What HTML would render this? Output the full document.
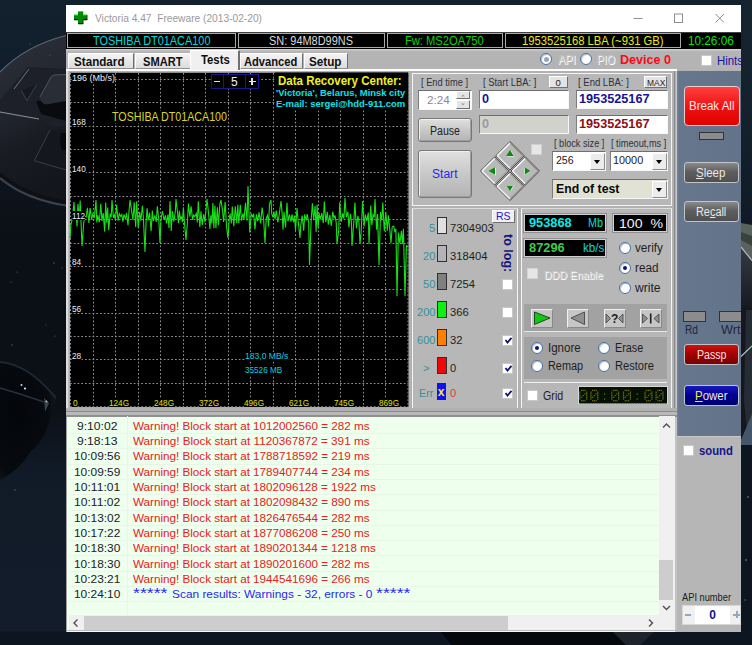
<!DOCTYPE html>
<html><head><meta charset="utf-8"><title>Victoria 4.47</title>
<style>
*{box-sizing:border-box;margin:0;padding:0}
html,body{width:752px;height:645px;overflow:hidden}
body{position:relative;background:#0d1620;font-family:"Liberation Sans",sans-serif;font-size:12px;color:#202020}
.a{position:absolute}
#bg{left:0;top:0;width:752px;height:645px}
#win{left:66px;top:5px;width:675px;height:626.5px;background:#b1b1b1}
#title{left:66px;top:5px;width:675px;height:27px;background:#fff}
#ttext{font-size:11.5px;color:#9a9a9a;white-space:pre}
#status{left:66px;top:31.7px;width:675px;height:17.5px;background:#000;border-top:1.5px solid #404040}
.cell{top:33px;height:15px;border:1px solid #a8a8a8;background:#000}
.ct{font-size:12px;white-space:nowrap}
.tt{font-size:12px;font-weight:bold;color:#101010;white-space:nowrap}
#tabrow{left:66px;top:49.2px;width:675px;height:21px;background:linear-gradient(#d8d8d8 0,#b8b8b8 2px,#b4b4b4 3px)}
.tab{top:53px;height:16px;font-weight:bold;font-size:13px;line-height:15px;text-align:center;color:#101010;background:linear-gradient(#f4f4f4,#dcdcdc);border-top:1px solid #fff;border-left:1px solid #fff;border-right:1px solid #707070;border-bottom:1px solid #909090;white-space:nowrap}
.tab.act{top:50px;height:20px;background:#f0f0f0;line-height:18px;border-bottom:none;border-right:2px solid #707070}
#pageline{left:66px;top:69.4px;width:611px;height:2px;background:#fff}
#chart{left:70px;top:72px;width:339px;height:336px;background:#000}
.pan{background:#b7b7b7;border:1.5px solid #f4f4f4}
.lbl{font-size:10px;color:#3c4454;white-space:nowrap;letter-spacing:0.2px}
.inp{background:#fff;border-top:1.5px solid #6e6e6e;border-left:1.5px solid #7c7c7c;border-right:1.5px solid #f8f8f8;border-bottom:1.5px solid #f8f8f8;font-weight:bold;font-size:14px;line-height:15px;padding-left:3px;font-family:"Liberation Serif",serif;white-space:nowrap;overflow:hidden}
.btn{background:linear-gradient(#e0e0e0,#c6c6c6 55%,#b4b4b4);border:1px solid #767676;border-radius:3px;box-shadow:inset 1px 1px 0 #f0f0f0,inset -1px -1px 0 #a0a0a0;text-align:center;font-size:13px;color:#202020}
.sbtn{background:#e4e4e4;border-top:1px solid #fff;border-left:1px solid #fff;border-right:1px solid #707070;border-bottom:1px solid #707070;text-align:center;font-size:10px;line-height:9px;color:#202020}
.radio{width:12px;height:12px;border-radius:50%;background:#fff;border:1.3px solid #4470a6;box-shadow:inset 1px 1px 1px rgba(0,0,0,.25)}
.radio.on:after{content:"";position:absolute;left:3px;top:3px;width:4px;height:4px;border-radius:50%;background:#10107a}
.chk{width:11px;height:11px;background:#fff;border:1px solid #c8c8c8}
.t12{font-size:12px;white-space:nowrap;color:#2a2a2a}
.disp{background:#000;border:1px solid #d0d0d0;box-shadow:0 0 0 1px #909090;white-space:nowrap}
.sbar{background:linear-gradient(#8a8a8a,#5e5e5e 45%,#505050);border:1px solid #c0c4c8;border-radius:3px;color:#e8e8e8;font-size:13px;text-align:center;line-height:19px}
.ind{background:#8c8c8c;border:1px solid #30343a}
.lrow{left:68px;width:591px;height:15.3px;font-size:11.5px;line-height:15px;white-space:nowrap}
.lt{position:absolute;left:0;width:53px;text-align:right;color:#202020}
.lm{position:absolute;left:64px;color:#e82020}
.yl{font-size:9.5px;color:#e8eef8;white-space:nowrap;background:#000;line-height:9px}
.xl{font-size:9.5px;color:#e0e010;white-space:nowrap;background:#000;line-height:9px}
.rl{left:405px;width:30px;text-align:right;font-size:13px;color:#3a9098;line-height:15px}
.rc{left:450px;font-size:13px;color:#2a2a2a;line-height:15px;white-space:nowrap}
.dd{width:15px;height:17px;background:#ececec;border-top:1px solid #fff;border-left:1px solid #fff;border-right:1.5px solid #8c8c8c;border-bottom:1.5px solid #8c8c8c}
.dd:after{content:"";position:absolute;left:3px;top:6px;border-left:3.5px solid transparent;border-right:3.5px solid transparent;border-top:4px solid #000}
.combo{font-family:"Liberation Sans",sans-serif;font-weight:normal;font-size:13px;color:#202028;line-height:16px}
.pb{top:309px;width:22px;height:19px;background:#c6c6c6;border-top:1px solid #f0f0f0;border-left:1px solid #f0f0f0;border-right:1px solid #8a8a8a;border-bottom:1px solid #8a8a8a}
</style></head><body>
<svg id="bg" class="a" width="752" height="645" viewBox="0 0 752 645">
<defs>
<linearGradient id="g0" x1="0" y1="0" x2="0" y2="1"><stop offset="0" stop-color="#13212f"/><stop offset="0.120" stop-color="#111d2a"/><stop offset="0.320" stop-color="#0d121a"/><stop offset="0.380" stop-color="#0b0f16"/><stop offset="0.620" stop-color="#0b0f16"/><stop offset="0.740" stop-color="#111b28"/><stop offset="1" stop-color="#121c2a"/></linearGradient>
<linearGradient id="g1" x1="0" y1="0" x2="0.200" y2="1"><stop offset="0" stop-color="#2c303a"/><stop offset="0.450" stop-color="#23262f"/><stop offset="0.700" stop-color="#191b23"/><stop offset="1" stop-color="#14161d"/></linearGradient>
<linearGradient id="g3" x1="0" y1="0" x2="0" y2="1"><stop offset="0" stop-color="#343a40"/><stop offset="1" stop-color="#14181e"/></linearGradient>
<radialGradient id="g4" cx="0.300" cy="0.400" r="0.800"><stop offset="0" stop-color="#04060a"/><stop offset="0.700" stop-color="#070a0f"/><stop offset="1" stop-color="#18222e"/></radialGradient>
<linearGradient id="g5" x1="0" y1="0" x2="0" y2="1"><stop offset="0" stop-color="#16242f"/><stop offset="0.200" stop-color="#14212d"/><stop offset="0.340" stop-color="#0f1a26"/><stop offset="1" stop-color="#0f1a26"/></linearGradient>
</defs>
<rect width="752" height="645" fill="url(#g0)"/>
<path d="M0 72Q25 46 66 35.500V205.500Q25 199 0 178Z" fill="url(#g1)"/>
<path d="M0 72Q25 46 66 35.500" stroke="#5c6672" stroke-width="1.100" fill="none"/>
<path d="M0 172Q25 194 66 200.500V205.500Q25 199 0 178Z" fill="#0e1016"/>
<path d="M0 178Q25 199 66 205.500" stroke="#3a444e" stroke-width="2.200" fill="none"/>
<path d="M28 67L66 69V126L54 127L39 119L0 111V100Z" fill="#1d2029"/>
<path d="M14 89L29 69" stroke="#747c88" stroke-width="0.900" fill="none"/>
<path d="M0 112L39 119" stroke="#8a929c" stroke-width="1" fill="none"/>
<path d="M21.400 90.500L36.300 85L27 100.700Z" fill="#15181e"/>
<path d="M21.400 90.500L27 100.700L36.300 85" stroke="#4c525c" stroke-width="0.700" fill="none"/>
<path d="M36 101L41 114L66 121V100Z" fill="#090b0f"/>
<path d="M40 97L51 77Q52.500 75 55 75L66 74.500V101L46 104.500Q40 103 40 97Z" fill="#292d36"/>
<path d="M40 97L51 77Q52.500 75 55 75L66 74.500" stroke="#525862" stroke-width="0.900" fill="none"/>
<path d="M50 130L34.400 160.700L66 170V130Z" fill="#15171e"/>
<path d="M50 130L34.400 160.700L66 170" stroke="#3c424c" stroke-width="0.900" fill="none"/>
<path d="M61 133H66V150H62Q59 141 61 133Z" fill="#08090c"/>
<path d="M0 362Q28 364 56 398L52 412Q46 440 30 452Q20 470 0 480Z" fill="url(#g4)"/>
<path d="M0 362Q28 364 56 398" stroke="#1c2734" stroke-width="2" fill="none"/>
<path d="M0 388L20 394L44 402" stroke="#2a323c" stroke-width="1.400" fill="none"/>
<path d="M44 398L49 403L45 412Z" fill="#3a424c"/>
<circle cx="21.500" cy="385" r="1" fill="#d0d8e0"/><circle cx="25" cy="388.500" r="1.100" fill="#e0e8f0"/><circle cx="46.500" cy="401.500" r="0.900" fill="#c0c8d0"/>
<g fill="#5a6878"><circle cx="54" cy="263" r="0.700"/><circle cx="62" cy="268" r="0.600"/><circle cx="17" cy="272" r="0.600"/><circle cx="11" cy="282" r="0.600"/><circle cx="12" cy="345" r="0.700"/><circle cx="55" cy="336" r="0.600"/><circle cx="46" cy="325" r="0.500"/><circle cx="15" cy="490" r="0.700"/><circle cx="30" cy="44" r="0.600"/><circle cx="50" cy="55" r="0.600"/></g>
<rect x="741" y="0" width="11" height="645" fill="url(#g5)"/>
<path d="M741 223L752 225V262L741 248Z" fill="#5a625e"/>
<path d="M741 232L752 236V246L741 240Z" fill="#3a423e"/>
<path d="M741 248L752 262V312H741Z" fill="url(#g3)"/>
<path d="M741 247L752 260.500" stroke="#b0b8b8" stroke-width="1.200" fill="none"/>
<rect x="741" y="310" width="11" height="135" fill="#14181e"/>
<path d="M746 310L752 310V420L748 440L744 400Z" fill="#262c34"/>
<path d="M741 356.500L752 346" stroke="#b8c0c8" stroke-width="1.100" fill="none"/>
<path d="M741 440L752 414V446H741Z" fill="#46566a"/>
<rect x="741" y="445" width="11" height="200" fill="#0d1620"/>
<rect x="0" y="631.500" width="752" height="14" fill="#0d1520"/>
<path d="M440 631L650 631L636 645L452 645Z" fill="#05080c"/>
<path d="M612 631L655 631L640 645L626 645Z" fill="#1e242c"/>
<circle cx="746" cy="560" r="0.800" fill="#8090a0"/><circle cx="748" cy="497" r="0.800" fill="#8090a0"/><circle cx="745" cy="600" r="0.700" fill="#60707e"/>
</svg>
<div class="a" id="clip" style="left:0;top:0;width:741px;height:645px;overflow:hidden">
<div id="win" class="a"></div>
<div id="title" class="a"></div>
<svg class="a" style="left:73px;top:10px" width="16" height="16" viewBox="73 10 16 16"><path d="M78 11.200h5.200v3.600h4v5.200h-4v4h-5.200v-4h-4v-5.200h4z" fill="#008a00"/><path d="M78 11.500h5.200M74 15.100h4M83.200 15.100h4" stroke="#20f020" stroke-width="0.800" fill="none"/><path d="M74 19.800h4M83.200 19.800h4M78 23.800h5.200" stroke="#000" stroke-width="1.100" fill="none"/><path d="M87 15v5M83 20v4" stroke="#043004" stroke-width="0.700" fill="none"/></svg>
<div id="ttext" class="a" style="left:95px;top:11.59px;transform:scaleX(0.8866);transform-origin:0.00px 0">Victoria 4.47  Freeware (2013-02-20)</div>
<svg class="a" style="left:620px;top:6px" width="120" height="26" viewBox="0 0 120 26"><g stroke="#8e8e8e" stroke-width="1" fill="none"><path d="M13.500 12.500h9"/><rect x="54.500" y="8" width="8" height="8.500"/><path d="M95.500 8l8.500 8.500M104 8l-8.500 8.500"/></g></svg>
<div id="status" class="a"></div>
<div class="a cell" style="left:67px;width:169px"></div><div class="a ct" style="left:92.50px;top:34.44px;color:#00d8d8;transform:scaleX(0.9096);transform-origin:0.00px 0">TOSHIBA DT01ACA100</div>
<div class="a cell" style="left:238px;width:147px"></div><div class="a ct" style="left:268.90px;top:34.44px;color:#d8d8d8;transform:scaleX(0.9126);transform-origin:0.00px 0">SN: 94M8D99NS</div>
<div class="a cell" style="left:387px;width:116px"></div><div class="a ct" style="left:404.52px;top:34.44px;color:#10d010;transform:scaleX(0.9297);transform-origin:0.00px 0">Fw: MS2OA750</div>
<div class="a cell" style="left:505px;width:176px"></div><div class="a ct" style="left:522.45px;top:34.44px;color:#e8e820;transform:scaleX(0.9363);transform-origin:0.00px 0">1953525168 LBA (~931 GB)</div>
<div class="a cell" style="left:682px;width:58px;border-color:#000"></div><div class="a ct" style="left:688.12px;top:34.44px;color:#10e010;transform:scaleX(0.9793);transform-origin:0.00px 0">10:26:06</div>
<div id="tabrow" class="a"></div>
<div class="a tab" style="left:68px;width:66px"></div>
<div class="a tab" style="left:135px;width:56px"></div>
<div class="a tab" style="left:240px;width:63px"></div>
<div class="a tab" style="left:304px;width:44px"></div>
<div id="pageline" class="a"></div>
<div class="a tab act" style="left:190px;width:50px"></div>
<div class="a tt" style="left:73.50px;top:54.74px;transform:scaleX(0.9709);transform-origin:0.00px 0">Standard</div>
<div class="a tt" style="left:143.00px;top:54.74px;transform:scaleX(0.9257);transform-origin:0.00px 0">SMART</div>
<div class="a tt" style="left:200.75px;top:52.74px;transform:scaleX(0.9436);transform-origin:0.00px 0">Tests</div>
<div class="a tt" style="left:243.75px;top:54.74px;transform:scaleX(0.9284);transform-origin:0.00px 0">Advanced</div>
<div class="a tt" style="left:308.75px;top:54.74px;transform:scaleX(0.9747);transform-origin:0.00px 0">Setup</div>
<div class="a radio" style="left:540px;top:53px"></div>
<div class="a" style="left:543.500px;top:56.500px;width:5px;height:5px;border-radius:50%;background:#9aa4b4"></div>
<div class="a" style="left:557.50px;top:52.64px;font-size:12px;color:#c4c4c4;text-shadow:1px 1px 0 #fff;transform:scaleX(0.9047);transform-origin:0.00px 0">API</div>
<div class="a radio" style="left:580px;top:53px"></div>
<div class="a" style="left:597.00px;top:52.64px;font-size:12px;color:#c4c4c4;text-shadow:1px 1px 0 #fff;transform:scaleX(0.8707);transform-origin:0.00px 0">PIO</div>
<div class="a" style="left:620.00px;top:51.63px;font-size:13px;font-weight:bold;color:#ff0818;white-space:nowrap;transform:scaleX(0.9665);transform-origin:0.00px 0">Device 0</div>
<div class="a chk" style="left:701px;top:55px"></div>
<div class="a" style="left:717.00px;top:54.14px;font-size:12px;color:#1818a0;transform:scaleX(0.9509);transform-origin:0.00px 0">Hints</div>
<svg class="a" style="left:0;top:0" width="752" height="645" viewBox="0 0 752 645">
<rect x="66" y="71" width="2.200" height="340" fill="#dedede"/><rect x="70" y="72.800" width="338.500" height="334.200" fill="#000"/>
<g stroke="#8e8e8e" stroke-width="1" stroke-dasharray="1.75 2" fill="none">
<path d="M70.5 73V407"/>
<path d="M93.5 73V407"/>
<path d="M115.5 73V407"/>
<path d="M138.5 73V407"/>
<path d="M160.5 73V407"/>
<path d="M183.5 73V407"/>
<path d="M205.5 73V407"/>
<path d="M228.5 73V407"/>
<path d="M250.5 73V407"/>
<path d="M273.5 73V407"/>
<path d="M295.5 73V407"/>
<path d="M318.5 73V407"/>
<path d="M340.5 73V407"/>
<path d="M363.5 73V407"/>
<path d="M385.5 73V407"/>
<path d="M408.0 73V407"/>
<path d="M70 79.5H408.5"/>
<path d="M70 102.5H408.5"/>
<path d="M70 126.5H408.5"/>
<path d="M70 149.5H408.5"/>
<path d="M70 172.5H408.5"/>
<path d="M70 196.5H408.5"/>
<path d="M70 219.5H408.5"/>
<path d="M70 243.5H408.5"/>
<path d="M70 266.5H408.5"/>
<path d="M70 289.5H408.5"/>
<path d="M70 313.5H408.5"/>
<path d="M70 336.5H408.5"/>
<path d="M70 359.5H408.5"/>
<path d="M70 383.5H408.5"/>
<path d="M70 406.7H408.5"/>
</g>
<rect x="275" y="72.5" width="133" height="37" fill="#000"/>
<polyline points="70,238 71,224 72.5,217.8 74.0,202.0 75.0,219.7 76.0,211.5 77.0,226.4 78.0,203.8 79.2,220.0 80.2,200.5 81.2,226.3 82,246 83.7,223.2 84.7,216.2 86.2,217.0 87.4,207.8 88.9,223.0 90.1,208.0 91.6,219.6 92.8,214.0 94.3,218.0 96,200 96.8,222.5 97.8,215.2 99.3,222.3 100.8,203.8 102.0,220.9 103.2,213.1 104.7,231.8 105.7,202.6 106.7,222.7 107.7,207.6 108.7,230.1 110.2,213.6 111.2,217.0 112,200 113.4,217.9 114.4,215.0 115.4,220.5 116.6,204.9 118.1,220.6 119.3,213.7 120.8,216.6 121.8,214.6 122.8,221.7 124.0,214.4 125.5,219.4 126.5,212.8 128.0,225.1 129.0,211.2 130,200 132.0,213.4 133.0,219.9 134.2,202.3 135.7,226.9 136.7,201.3 138.2,227.7 139.7,211.7 140.9,220.6 142.4,205.7 143.4,218.4 145,252 146.1,221.2 147.1,208.2 148.1,220.5 149.6,212.7 151.1,231.1 152.3,210.6 153.3,221.1 154.8,215.3 156.3,221.8 157.3,206.3 158.8,220.0 160,243 161.0,219.2 162.5,211.0 164.0,220.0 165.5,215.3 166.5,223.4 168.0,214.6 169.0,228.0 170.0,201.1 171.2,230.9 172.4,211.0 173.9,221.6 175.4,210.8 176,199 177.4,211.4 178.4,223.2 179.4,210.7 180.4,219.4 181.4,216.3 182.4,222.1 183.4,207.2 184.4,222.1 186,240 187.4,222.9 188.4,203.6 189.9,216.7 191.1,206.2 192.6,220.0 193.6,215.0 194.8,216.7 196.3,213.3 197.3,222.5 198.3,201.2 199.8,227.0 201.0,211.2 202.2,225.2 203.7,214.0 204.9,222.1 205.9,211.0 207,199 208.4,211.7 209.9,228.9 210.9,215.4 211.9,223.4 212.9,203.1 213.9,228.2 214.9,205.5 215.9,228.1 217.4,207.2 218.4,225.2 219.9,203.8 221,200 222.6,211.1 223.6,221.9 225.1,202.1 226.6,227.3 228,238 229.1,220.5 230.1,213.5 231.3,223.4 232.3,206.6 233.8,226.1 235.3,206.3 236.8,223.3 237.8,204.9 238.8,223.2 240.3,204.7 241.5,220.7 243.0,213.3 244.0,219.9 245.5,202.8 247.0,220.6 248,186 249.7,232.4 251.2,213.9 252.7,216.8 253.7,213.7 254.9,229.5 256.4,214.4 257.6,221.2 259.1,212.4 260.6,223.5 262.1,207.6 263.6,219.0 265,243 266.3,217.8 267.5,215.3 268.5,226.6 269.5,204.2 271,200 271.7,213.6 272.9,217.4 273.9,211.6 275.1,219.2 276.3,210.6 277.8,222.3 279.0,215.9 281,201 282.0,211.6 283.0,229.8 284.0,211.9 285.5,227.4 287.0,202.8 288.0,221.3 289.5,214.7 291.0,221.6 292.0,214.3 293.5,222.1 294.5,215.6 295.5,230.6 297.0,208.0 298.2,221.1 300,238 300.7,225.3 302.2,215.6 303.7,230.6 304.7,214.4 306.2,220.3 307.2,214.0 308.7,222.3 309.5,265 311.2,219.4 312.4,203.4 313.6,220.2 315.1,206.0 316.1,231.9 317.1,204.7 318.1,227.4 319.1,212.9 320.3,219.3 321.8,213.2 323.3,223.2 324.3,201.6 325.8,222.1 327.3,211.9 328.3,224.6 329.8,215.0 331.3,225.8 332.8,211.6 334.0,218.4 335.0,215.4 336.2,222.3 337,244 338.7,230.5 339.7,202.2 341.2,222.0 342.7,213.3 343.9,218.7 345,198 346.4,217.2 347.9,211.8 348.9,227.5 350.4,213.8 351.4,221.5 352,246 353.9,220.4 354.9,202.6 356.4,228.3 357.9,215.9 358.9,221.5 360,244 361.1,232.4 362.6,201.1 364.1,226.1 365.3,214.5 366.8,220.8 368.3,212.5 369,244 370.8,205.5 371.8,225.3 373.0,214.7 374.2,217.5 375,199 376.6,229.8 377.6,214.0 379,265 380.6,212.1 381.8,220.4 382.8,202.5 384.3,231.1 385.8,212.0 387.3,230.8 388.3,215.3 389.5,226.9 391,243 392.2,226.8 393.7,226.0 394.9,232.2 395.9,228.9 397,296 398.4,232.7 399.9,243.2 401.4,230.7 402.4,244.0 403.4,228.8 405,296 406.4,245.6 408,247" fill="none" stroke="#18e018" stroke-width="1.1" stroke-linejoin="miter"/>
</svg>
<div class="a yl" style="left:72.00px;top:73.20px;transform:scaleX(0.9470);transform-origin:0.00px 0">196 (Mb/s)</div>
<div class="a yl" style="left:71.70px;top:116.90px;transform:scaleX(0.8638);transform-origin:0.00px 0">168</div>
<div class="a yl" style="left:71.70px;top:163.70px;transform:scaleX(0.8638);transform-origin:0.00px 0">140</div>
<div class="a yl" style="left:71.70px;top:210.50px;transform:scaleX(0.8709);transform-origin:0.00px 0">112</div>
<div class="a yl" style="left:71.70px;top:257.30px;transform:scaleX(0.8697);transform-origin:0.00px 0">84</div>
<div class="a yl" style="left:71.70px;top:304.10px;transform:scaleX(0.8697);transform-origin:0.00px 0">56</div>
<div class="a yl" style="left:71.70px;top:350.90px;transform:scaleX(0.8697);transform-origin:0.00px 0">28</div>
<div class="a xl" style="left:72.61px;top:398.00px;transform:scaleX(0.8684);transform-origin:-0.01px 0">0</div>
<div class="a xl" style="left:109.00px;top:398.00px;transform:scaleX(0.8602);transform-origin:0.00px 0">124G</div>
<div class="a xl" style="left:153.71px;top:398.00px;transform:scaleX(0.8602);transform-origin:-0.01px 0">248G</div>
<div class="a xl" style="left:198.71px;top:398.00px;transform:scaleX(0.8602);transform-origin:-0.01px 0">372G</div>
<div class="a xl" style="left:243.71px;top:398.00px;transform:scaleX(0.8602);transform-origin:-0.01px 0">496G</div>
<div class="a xl" style="left:289.00px;top:398.00px;transform:scaleX(0.8602);transform-origin:0.00px 0">621G</div>
<div class="a xl" style="left:334.00px;top:398.00px;transform:scaleX(0.8602);transform-origin:0.00px 0">745G</div>
<div class="a xl" style="left:378.50px;top:398.00px;transform:scaleX(0.8602);transform-origin:0.00px 0">869G</div>
<div class="a" style="left:112.00px;top:110.74px;font-size:12px;color:#d8d820;white-space:nowrap;background:#000;line-height:12px;transform:scaleX(0.8903);transform-origin:0.00px 0">TOSHIBA DT01ACA100</div>
<div class="a" style="left:210.500px;top:74px;width:48px;height:14.500px;border:1px solid #18188a;background:#000"></div>
<div class="a" style="left:223px;top:74px;width:1px;height:14px;background:#18188a"></div>
<div class="a" style="left:245px;top:74px;width:1px;height:14px;background:#18188a"></div>
<div class="a" style="left:214px;top:80.500px;width:6px;height:1.800px;background:#e0e4f0"></div>
<div class="a" style="left:248.500px;top:80.500px;width:7px;height:1.800px;background:#e0e4f0"></div>
<div class="a" style="left:251.100px;top:77.900px;width:1.800px;height:7px;background:#e0e4f0"></div>
<div class="a" style="left:230.96px;top:75.14px;font-size:12px;color:#f0f0f0">5</div>
<div class="a" style="left:277.50px;top:74.14px;font-size:12px;font-weight:bold;color:#f0f020;white-space:nowrap;transform:scaleX(0.9595);transform-origin:0.00px 0">Data Recovery Center:</div>
<div class="a" style="left:276.20px;top:87.00px;font-size:9.500px;font-weight:bold;color:#10e0e8;white-space:nowrap;transform:scaleX(0.9904);transform-origin:0.00px 0">'Victoria', Belarus, Minsk city</div>
<div class="a" style="left:276.20px;top:97.60px;font-size:9.500px;font-weight:bold;color:#10e0e8;white-space:nowrap;transform:scaleX(0.9974);transform-origin:0.00px 0">E-mail: sergei@hdd-911.com</div>
<div class="a" style="left:244.80px;top:351.66px;font-size:9px;color:#08d0e0;white-space:nowrap;background:#000;line-height:9px;transform:scaleX(0.9532);transform-origin:0.00px 0">183,0 MB/s</div>
<div class="a" style="left:244.80px;top:366.36px;font-size:9px;color:#08d0e0;white-space:nowrap;background:#000;line-height:9.5px;transform:scaleX(0.9066);transform-origin:0.00px 0">35526 MB</div>
<div class="a pan" style="left:412.400px;top:73.400px;width:259.800px;height:132.600px"></div>
<div class="a" style="left:420.60px;top:76.55px;font-size:10px;color:#2a3242;white-space:pre;transform:scaleX(0.9293);transform-origin:0.00px 0">[ End time ]</div>
<div class="a" style="left:482.50px;top:76.55px;font-size:10px;color:#2a3242;white-space:pre;transform:scaleX(0.9400);transform-origin:0.00px 0">[ Start LBA: ]</div>
<div class="a" style="left:577.70px;top:76.55px;font-size:10px;color:#2a3242;white-space:pre;transform:scaleX(0.9518);transform-origin:0.00px 0">[ End LBA: ]</div>
<div class="a sbtn" style="left:549px;top:76px;width:19px;height:12px"></div>
<div class="a" style="left:555.55px;top:76.60px;font-size:9.5px;color:#202020;white-space:pre">0</div>
<div class="a sbtn" style="left:644px;top:76px;width:23px;height:12px"></div>
<div class="a" style="left:646.50px;top:76.60px;font-size:9.5px;color:#202020;white-space:pre;transform:scaleX(0.8886);transform-origin:0.00px 0">MAX</div>
<div class="a inp" style="left:418px;top:90px;width:54px;height:20px"></div>
<div class="a" style="left:427.20px;top:93.84px;font-size:11px;color:#8888a0;white-space:pre;transform:scaleX(1.0643);transform-origin:0.00px 0">2:24</div>
<div class="a sbtn" style="left:456px;top:91px;width:14px;height:8px"></div>
<div class="a sbtn" style="left:456px;top:100px;width:14px;height:8.500px"></div>
<svg class="a" style="left:456px;top:91px" width="14" height="18"><path d="M5 5.500L7 3.500L9 5.500Z" fill="#a0a0a0"/><path d="M5 12.500L7 14.500L9 12.500Z" fill="#a0a0a0"/></svg>
<div class="a inp" style="left:479px;top:90px;width:90px;height:19px"></div>
<div class="a inp" style="left:576px;top:90px;width:92px;height:19px"></div>
<div class="a inp" style="left:479px;top:115px;width:90px;height:18.500px;background:#d2d2cc"></div>
<div class="a inp" style="left:576px;top:115px;width:92px;height:18.500px"></div>
<div class="a" style="left:481.80px;top:91.54px;font-size:12px;color:#14149a;white-space:pre;font-weight:bold;transform:scaleX(1.0467);transform-origin:0.00px 0">0</div>
<div class="a" style="left:579.30px;top:91.54px;font-size:12px;color:#14149a;white-space:pre;font-weight:bold;transform:scaleX(1.0562);transform-origin:0.00px 0">1953525167</div>
<div class="a" style="left:481.80px;top:116.94px;font-size:12px;color:#9a9aa0;white-space:pre;font-weight:bold;transform:scaleX(1.0467);transform-origin:0.00px 0">0</div>
<div class="a" style="left:579.30px;top:116.94px;font-size:12px;color:#8c1014;white-space:pre;font-weight:bold;transform:scaleX(1.0562);transform-origin:0.00px 0">1953525167</div>
<div class="a btn" style="left:417.800px;top:118px;width:54px;height:24px"></div>
<div class="a" style="left:429.50px;top:123.54px;font-size:12px;color:#202020;white-space:pre;transform:scaleX(0.8815);transform-origin:0.00px 0">Pause</div>
<div class="a btn" style="left:417.800px;top:150px;width:54px;height:47.500px"></div>
<div class="a" style="left:432.00px;top:167.14px;font-size:12px;color:#2828e8;white-space:pre;transform:scaleX(1.0062);transform-origin:0.00px 0">Start</div>
<svg class="a" style="left:477.750px;top:138.500px" width="64" height="64" viewBox="-32 -32 64 64"><g transform="translate(0,-15.2)"><polygon points="0,-14.300 14.300,0 0,14.300 -14.300,0" fill="#b9b9b9" stroke="#4a4a4a" stroke-width="1"/><path d="M-12.800,0L0,-12.800" stroke="#fff" stroke-width="1.400" fill="none"/><path d="M-12.800,0L0,12.800" stroke="#f4f4f4" stroke-width="1.400" fill="none"/><path d="M12.600,0L0,12.600M12.600,0L0,-12.600" stroke="#8a8a8a" stroke-width="1" fill="none"/></g><g transform="translate(0,15.2)"><polygon points="0,-14.300 14.300,0 0,14.300 -14.300,0" fill="#b9b9b9" stroke="#4a4a4a" stroke-width="1"/><path d="M-12.800,0L0,-12.800" stroke="#fff" stroke-width="1.400" fill="none"/><path d="M-12.800,0L0,12.800" stroke="#f4f4f4" stroke-width="1.400" fill="none"/><path d="M12.600,0L0,12.600M12.600,0L0,-12.600" stroke="#8a8a8a" stroke-width="1" fill="none"/></g><g transform="translate(-15.2,0)"><polygon points="0,-14.300 14.300,0 0,14.300 -14.300,0" fill="#b9b9b9" stroke="#4a4a4a" stroke-width="1"/><path d="M-12.800,0L0,-12.800" stroke="#fff" stroke-width="1.400" fill="none"/><path d="M-12.800,0L0,12.800" stroke="#f4f4f4" stroke-width="1.400" fill="none"/><path d="M12.600,0L0,12.600M12.600,0L0,-12.600" stroke="#8a8a8a" stroke-width="1" fill="none"/></g><g transform="translate(15.2,0)"><polygon points="0,-14.300 14.300,0 0,14.300 -14.300,0" fill="#b9b9b9" stroke="#4a4a4a" stroke-width="1"/><path d="M-12.800,0L0,-12.800" stroke="#fff" stroke-width="1.400" fill="none"/><path d="M-12.800,0L0,12.800" stroke="#f4f4f4" stroke-width="1.400" fill="none"/><path d="M12.600,0L0,12.600M12.600,0L0,-12.600" stroke="#8a8a8a" stroke-width="1" fill="none"/></g><g fill="#fff"><path d="M-3,-14.500L0.800,-20.500L4.600,-14.500Z"/><path d="M-2.600,14.500L0.800,20L4,14.500Z"/><path d="M-14.200,-3.500L-20.600,0.400L-14.200,4.400Z"/><path d="M14.200,-3L20.600,0.400L14.200,4Z"/></g><g fill="#0a8a10"><path d="M-3.800,-15L0,-21L3.800,-15Z"/><path d="M-3.200,14.800L0,20L3.200,14.800Z"/><path d="M-15,-3.800L-21.400,0L-15,3.800Z"/><path d="M14.800,-3.400L20.400,0L14.800,3.400Z"/></g></svg>
<div class="a" style="left:531px;top:143.500px;width:11px;height:11px;background:#e6e6e6;border:1px solid #d0d0d0"></div>
<div class="a" style="left:553.60px;top:138.35px;font-size:10px;color:#2a3242;white-space:pre;transform:scaleX(0.9140);transform-origin:0.00px 0">[ block size ]</div>
<div class="a" style="left:611.40px;top:138.35px;font-size:10px;color:#2a3242;white-space:pre;transform:scaleX(0.9214);transform-origin:0.00px 0">[ timeout,ms ]</div>
<div class="a inp" style="left:552px;top:151px;width:54px;height:20px"></div>
<div class="a dd" style="left:590.200px;top:152.800px"></div>
<div class="a inp" style="left:610px;top:151px;width:58px;height:20px"></div>
<div class="a dd" style="left:651.800px;top:152.800px"></div>
<div class="a" style="left:555.80px;top:154.39px;font-size:11.5px;color:#202028;white-space:pre;transform:scaleX(0.9173);transform-origin:0.00px 0">256</div>
<div class="a" style="left:613.20px;top:154.39px;font-size:11.5px;color:#202028;white-space:pre;transform:scaleX(0.9442);transform-origin:0.00px 0">10000</div>
<div class="a inp" style="left:552px;top:179px;width:116px;height:20px;background:#e2e2d4"></div>
<div class="a dd" style="left:651.800px;top:180.800px"></div>
<div class="a" style="left:556.10px;top:182.04px;font-size:12px;color:#080808;white-space:pre;font-weight:bold;transform:scaleX(1.0226);transform-origin:0.00px 0">End of test</div>
<div class="a pan" style="left:412.400px;top:207.500px;width:105.600px;height:201.700px;border-top-color:#dcdcdc"></div>
<div class="a sbtn" style="left:492px;top:210px;width:23px;height:13px;background:#f0f0f4"></div>
<div class="a" style="left:496.20px;top:210.25px;font-size:11px;color:#2020d0;white-space:pre;transform:scaleX(0.9489);transform-origin:0.00px 0">RS</div>
<div class="a" style="left:500px;top:246px;width:16px;height:16px"><div style="transform:rotate(90deg);transform-origin:0 0;position:absolute;left:15.300px;top:-12.200px;font-weight:bold;font-size:12.500px;color:#14147a;white-space:nowrap">to log:</div></div>
<div class="a" style="left:429.30px;top:222.09px;font-size:11.5px;color:#3a9098;white-space:pre;transform:scaleX(0.9678);transform-origin:0.00px 0">5</div>
<div class="a" style="left:437px;top:217px;width:9.500px;height:17px;background:#e0e0e0;border:1px solid #303030"></div>
<div class="a" style="left:450.00px;top:222.09px;font-size:11.5px;color:#1e1e1e;white-space:pre;transform:scaleX(0.9770);transform-origin:0.00px 0">7304903</div>
<div class="a" style="left:423.00px;top:250.09px;font-size:11.5px;color:#3a9098;white-space:pre;transform:scaleX(0.9768);transform-origin:0.00px 0">20</div>
<div class="a" style="left:437px;top:245px;width:9.500px;height:17px;background:#b4b4b8;border:1px solid #303030"></div>
<div class="a" style="left:450.00px;top:250.09px;font-size:11.5px;color:#1e1e1e;white-space:pre;transform:scaleX(0.9772);transform-origin:0.00px 0">318404</div>
<div class="a" style="left:423.00px;top:278.09px;font-size:11.5px;color:#3a9098;white-space:pre;transform:scaleX(0.9768);transform-origin:0.00px 0">50</div>
<div class="a" style="left:437px;top:273px;width:9.500px;height:17px;background:#808080;border:1px solid #303030"></div>
<div class="a" style="left:450.00px;top:278.09px;font-size:11.5px;color:#1e1e1e;white-space:pre;transform:scaleX(0.9768);transform-origin:0.00px 0">7254</div>
<div class="a chk" style="left:502.300px;top:279.3px"></div>
<div class="a" style="left:417.00px;top:306.09px;font-size:11.5px;color:#3a9098;white-space:pre;transform:scaleX(0.9642);transform-origin:0.00px 0">200</div>
<div class="a" style="left:437px;top:301px;width:9.500px;height:17px;background:#10f010;border:1px solid #303030"></div>
<div class="a" style="left:450.00px;top:306.09px;font-size:11.5px;color:#1e1e1e;white-space:pre;transform:scaleX(0.9746);transform-origin:0.00px 0">366</div>
<div class="a chk" style="left:502.300px;top:307.3px"></div>
<div class="a" style="left:417.00px;top:334.09px;font-size:11.5px;color:#3a9098;white-space:pre;transform:scaleX(0.9642);transform-origin:0.00px 0">600</div>
<div class="a" style="left:437px;top:329px;width:9.500px;height:17px;background:#ff8000;border:1px solid #303030"></div>
<div class="a" style="left:450.00px;top:334.09px;font-size:11.5px;color:#1e1e1e;white-space:pre;transform:scaleX(0.9768);transform-origin:0.00px 0">32</div>
<div class="a chk" style="left:502.300px;top:335.3px"></div>
<svg class="a" style="left:502.500px;top:335.3px" width="11" height="11"><path d="M2.500 5L4.500 7.500L8.500 2.800" stroke="#10107a" stroke-width="1.800" fill="none"/></svg>
<div class="a" style="left:422.50px;top:362.09px;font-size:11.5px;color:#3a9098;white-space:pre;transform:scaleX(0.9674);transform-origin:0.00px 0">&gt;</div>
<div class="a" style="left:437px;top:357px;width:9.500px;height:17px;background:#f00808;border:1px solid #303030"></div>
<div class="a" style="left:450.00px;top:362.09px;font-size:11.5px;color:#1e1e1e;white-space:pre;transform:scaleX(0.9678);transform-origin:0.00px 0">0</div>
<div class="a chk" style="left:502.300px;top:363.3px"></div>
<svg class="a" style="left:502.500px;top:363.3px" width="11" height="11"><path d="M2.500 5L4.500 7.500L8.500 2.800" stroke="#10107a" stroke-width="1.800" fill="none"/></svg>
<div class="a" style="left:418.70px;top:387.09px;font-size:11.5px;color:#3a9098;white-space:pre;transform:scaleX(0.9450);transform-origin:0.00px 0">Err</div>
<div class="a" style="left:437px;top:383px;width:8.500px;height:16.500px;background:#1010f0"></div>
<div class="a" style="left:437.86px;top:384.64px;font-size:12px;color:#f0f020;white-space:pre;font-weight:bold">x</div>
<div class="a" style="left:450.00px;top:387.09px;font-size:11.5px;color:#e83838;white-space:pre;transform:scaleX(0.9678);transform-origin:0.00px 0">0</div>
<div class="a chk" style="left:502.300px;top:387.8px"></div>
<svg class="a" style="left:502.500px;top:387.8px" width="11" height="11"><path d="M2.500 5L4.500 7.500L8.500 2.800" stroke="#10107a" stroke-width="1.800" fill="none"/></svg>
<div class="a pan" style="left:520.500px;top:207.500px;width:151.700px;height:201.700px;border-top-color:#dcdcdc"></div>
<div class="a disp" style="left:524px;top:214px;width:81.500px;height:18px"></div>
<div class="a" style="left:529.30px;top:216.14px;font-size:12px;color:#10e8e8;white-space:pre;font-weight:bold;transform:scaleX(1.0663);transform-origin:0.00px 0">953868</div>
<div class="a" style="left:587.90px;top:216.14px;font-size:12px;color:#10d8d8;white-space:pre;transform:scaleX(0.8997);transform-origin:0.00px 0">Mb</div>
<div class="a disp" style="left:612.500px;top:214px;width:54.500px;height:18px"></div>
<div class="a" style="left:618.60px;top:216.24px;font-size:13px;color:#f4f4f4;white-space:pre;transform:scaleX(1.0868);transform-origin:0.00px 0">100  %</div>
<div class="a disp" style="left:524px;top:239px;width:81.500px;height:18px"></div>
<div class="a" style="left:529.30px;top:241.34px;font-size:12px;color:#40c850;white-space:pre;font-weight:bold;transform:scaleX(1.0697);transform-origin:0.00px 0">87296</div>
<div class="a" style="left:582.60px;top:241.34px;font-size:12px;color:#10d8d8;white-space:pre;transform:scaleX(0.9675);transform-origin:0.00px 0">kb/s</div>
<div class="a radio" style="left:618.700px;top:241.800px"></div>
<div class="a radio on" style="left:618.700px;top:262px"></div>
<div class="a radio" style="left:618.700px;top:281.700px"></div>
<div class="a" style="left:635.30px;top:240.64px;font-size:12px;color:#1e1e1e;white-space:pre;transform:scaleX(0.9731);transform-origin:0.00px 0">verify</div>
<div class="a" style="left:635.30px;top:260.84px;font-size:12px;color:#1e1e1e;white-space:pre;transform:scaleX(0.9779);transform-origin:0.00px 0">read</div>
<div class="a" style="left:635.30px;top:280.64px;font-size:12px;color:#1e1e1e;white-space:pre;transform:scaleX(1.0101);transform-origin:0.00px 0">write</div>
<div class="a" style="left:526.500px;top:268px;width:11px;height:11px;background:#e6e6e6;border:1px solid #d4d4d4"></div>
<div class="a" style="left:543.50px;top:268.65px;font-size:11px;color:#cacaca;white-space:pre;text-shadow:1px 1px 0 #fff;transform:scaleX(0.9617);transform-origin:0.00px 0">DDD Enable</div>
<div class="a" style="left:524px;top:304px;width:143px;height:28px;background:#a2a2a2;border-bottom:1px solid #e8e8e8"></div>
<div class="a pb" style="left:530.5px"></div>
<div class="a pb" style="left:567px"></div>
<div class="a pb" style="left:603.5px"></div>
<div class="a pb" style="left:639.5px"></div>
<svg class="a" style="left:524px;top:304px" width="143" height="28" viewBox="524 304 143 28">
<path d="M534.500 312L550 318L534.500 324.500Z" fill="#10c810" stroke="#204820" stroke-width="1"/>
<path d="M584.500 312L571 318L584.500 324.500Z" fill="#909090" stroke="#505050" stroke-width="1"/>
<path d="M606 314L610.500 318.500L606 323Z" fill="#909090" stroke="#404040" stroke-width="0.800"/><path d="M623 314L618.500 318.500L623 323Z" fill="#909090" stroke="#404040" stroke-width="0.800"/>
<path d="M642.500 314L647.500 318.500L642.500 323Z" fill="#909090" stroke="#404040" stroke-width="0.800"/><path d="M659 314L654 318.500L659 323Z" fill="#909090" stroke="#404040" stroke-width="0.800"/>
<path d="M650.700 313.500V323.500" stroke="#202020" stroke-width="1.600"/>
</svg>
<div class="a" style="left:610.93px;top:312.14px;font-size:12px;color:#202020;white-space:pre;font-weight:bold">?</div>
<div class="a" style="left:524px;top:337px;width:143px;height:41.500px;background:#a2a2a2"></div>
<div class="a" style="left:524px;top:381.500px;width:143px;height:1px;background:#f0f0f0"></div>
<div class="a radio on" style="left:531.400px;top:342px"></div>
<div class="a radio" style="left:598px;top:342px"></div>
<div class="a radio" style="left:531.400px;top:360px"></div>
<div class="a radio" style="left:598px;top:360px"></div>
<div class="a" style="left:548.30px;top:341.14px;font-size:12px;color:#1e1e1e;white-space:pre;transform:scaleX(0.9609);transform-origin:0.00px 0">Ignore</div>
<div class="a" style="left:614.70px;top:341.14px;font-size:12px;color:#1e1e1e;white-space:pre;transform:scaleX(0.9024);transform-origin:0.00px 0">Erase</div>
<div class="a" style="left:548.30px;top:359.44px;font-size:12px;color:#1e1e1e;white-space:pre;transform:scaleX(0.9073);transform-origin:0.00px 0">Remap</div>
<div class="a" style="left:614.70px;top:359.44px;font-size:12px;color:#1e1e1e;white-space:pre;transform:scaleX(0.9255);transform-origin:0.00px 0">Restore</div>
<div class="a chk" style="left:527.400px;top:390px"></div>
<div class="a" style="left:543.40px;top:389.14px;font-size:12px;color:#1e1e1e;white-space:pre;transform:scaleX(0.8910);transform-origin:0.00px 0">Grid</div>
<div class="a" style="left:578px;top:385.500px;width:89.500px;height:18.500px;background:#000;border:1px solid #d8d8d8"></div>
<svg class="a" style="left:579px;top:386.500px" width="88" height="17" viewBox="579 386.500 88 17"><g stroke="#0a240a" stroke-width="0.500"><path d="M580.70 386.500v17"/><path d="M582.40 386.500v17"/><path d="M584.10 386.500v17"/><path d="M585.80 386.500v17"/><path d="M587.50 386.500v17"/><path d="M589.20 386.500v17"/><path d="M590.90 386.500v17"/><path d="M592.60 386.500v17"/><path d="M594.30 386.500v17"/><path d="M596.00 386.500v17"/><path d="M597.70 386.500v17"/><path d="M599.40 386.500v17"/><path d="M601.10 386.500v17"/><path d="M602.80 386.500v17"/><path d="M604.50 386.500v17"/><path d="M606.20 386.500v17"/><path d="M607.90 386.500v17"/><path d="M609.60 386.500v17"/><path d="M611.30 386.500v17"/><path d="M613.00 386.500v17"/><path d="M614.70 386.500v17"/><path d="M616.40 386.500v17"/><path d="M618.10 386.500v17"/><path d="M619.80 386.500v17"/><path d="M621.50 386.500v17"/><path d="M623.20 386.500v17"/><path d="M624.90 386.500v17"/><path d="M626.60 386.500v17"/><path d="M628.30 386.500v17"/><path d="M630.00 386.500v17"/><path d="M631.70 386.500v17"/><path d="M633.40 386.500v17"/><path d="M635.10 386.500v17"/><path d="M636.80 386.500v17"/><path d="M638.50 386.500v17"/><path d="M640.20 386.500v17"/><path d="M641.90 386.500v17"/><path d="M643.60 386.500v17"/><path d="M645.30 386.500v17"/><path d="M647.00 386.500v17"/><path d="M648.70 386.500v17"/><path d="M650.40 386.500v17"/><path d="M652.10 386.500v17"/><path d="M653.80 386.500v17"/><path d="M655.50 386.500v17"/><path d="M657.20 386.500v17"/><path d="M658.90 386.500v17"/><path d="M660.60 386.500v17"/><path d="M662.30 386.500v17"/><path d="M664.00 386.500v17"/><path d="M665.70 386.500v17"/><path d="M579 387.30h88"/><path d="M579 389.00h88"/><path d="M579 390.70h88"/><path d="M579 392.40h88"/><path d="M579 394.10h88"/><path d="M579 395.80h88"/><path d="M579 397.50h88"/><path d="M579 399.20h88"/><path d="M579 400.90h88"/><path d="M579 402.60h88"/></g><g fill="#a09810" fill-opacity="0.700"><rect x="580.92" y="389.30" width="1.250" height="1.250"/><rect x="582.64" y="389.30" width="1.250" height="1.250"/><rect x="584.36" y="389.30" width="1.250" height="1.250"/><rect x="579.20" y="391.02" width="1.250" height="1.250"/><rect x="586.08" y="391.02" width="1.250" height="1.250"/><rect x="579.20" y="392.74" width="1.250" height="1.250"/><rect x="584.36" y="392.74" width="1.250" height="1.250"/><rect x="586.08" y="392.74" width="1.250" height="1.250"/><rect x="579.20" y="394.46" width="1.250" height="1.250"/><rect x="582.64" y="394.46" width="1.250" height="1.250"/><rect x="586.08" y="394.46" width="1.250" height="1.250"/><rect x="579.20" y="396.18" width="1.250" height="1.250"/><rect x="580.92" y="396.18" width="1.250" height="1.250"/><rect x="586.08" y="396.18" width="1.250" height="1.250"/><rect x="579.20" y="397.90" width="1.250" height="1.250"/><rect x="586.08" y="397.90" width="1.250" height="1.250"/><rect x="580.92" y="399.62" width="1.250" height="1.250"/><rect x="582.64" y="399.62" width="1.250" height="1.250"/><rect x="584.36" y="399.62" width="1.250" height="1.250"/><rect x="592.02" y="389.30" width="1.250" height="1.250"/><rect x="593.74" y="389.30" width="1.250" height="1.250"/><rect x="595.46" y="389.30" width="1.250" height="1.250"/><rect x="590.30" y="391.02" width="1.250" height="1.250"/><rect x="597.18" y="391.02" width="1.250" height="1.250"/><rect x="590.30" y="392.74" width="1.250" height="1.250"/><rect x="595.46" y="392.74" width="1.250" height="1.250"/><rect x="597.18" y="392.74" width="1.250" height="1.250"/><rect x="590.30" y="394.46" width="1.250" height="1.250"/><rect x="593.74" y="394.46" width="1.250" height="1.250"/><rect x="597.18" y="394.46" width="1.250" height="1.250"/><rect x="590.30" y="396.18" width="1.250" height="1.250"/><rect x="592.02" y="396.18" width="1.250" height="1.250"/><rect x="597.18" y="396.18" width="1.250" height="1.250"/><rect x="590.30" y="397.90" width="1.250" height="1.250"/><rect x="597.18" y="397.90" width="1.250" height="1.250"/><rect x="592.02" y="399.62" width="1.250" height="1.250"/><rect x="593.74" y="399.62" width="1.250" height="1.250"/><rect x="595.46" y="399.62" width="1.250" height="1.250"/><rect x="612.92" y="389.30" width="1.250" height="1.250"/><rect x="614.64" y="389.30" width="1.250" height="1.250"/><rect x="616.36" y="389.30" width="1.250" height="1.250"/><rect x="611.20" y="391.02" width="1.250" height="1.250"/><rect x="618.08" y="391.02" width="1.250" height="1.250"/><rect x="611.20" y="392.74" width="1.250" height="1.250"/><rect x="616.36" y="392.74" width="1.250" height="1.250"/><rect x="618.08" y="392.74" width="1.250" height="1.250"/><rect x="611.20" y="394.46" width="1.250" height="1.250"/><rect x="614.64" y="394.46" width="1.250" height="1.250"/><rect x="618.08" y="394.46" width="1.250" height="1.250"/><rect x="611.20" y="396.18" width="1.250" height="1.250"/><rect x="612.92" y="396.18" width="1.250" height="1.250"/><rect x="618.08" y="396.18" width="1.250" height="1.250"/><rect x="611.20" y="397.90" width="1.250" height="1.250"/><rect x="618.08" y="397.90" width="1.250" height="1.250"/><rect x="612.92" y="399.62" width="1.250" height="1.250"/><rect x="614.64" y="399.62" width="1.250" height="1.250"/><rect x="616.36" y="399.62" width="1.250" height="1.250"/><rect x="624.62" y="389.30" width="1.250" height="1.250"/><rect x="626.34" y="389.30" width="1.250" height="1.250"/><rect x="628.06" y="389.30" width="1.250" height="1.250"/><rect x="622.90" y="391.02" width="1.250" height="1.250"/><rect x="629.78" y="391.02" width="1.250" height="1.250"/><rect x="622.90" y="392.74" width="1.250" height="1.250"/><rect x="628.06" y="392.74" width="1.250" height="1.250"/><rect x="629.78" y="392.74" width="1.250" height="1.250"/><rect x="622.90" y="394.46" width="1.250" height="1.250"/><rect x="626.34" y="394.46" width="1.250" height="1.250"/><rect x="629.78" y="394.46" width="1.250" height="1.250"/><rect x="622.90" y="396.18" width="1.250" height="1.250"/><rect x="624.62" y="396.18" width="1.250" height="1.250"/><rect x="629.78" y="396.18" width="1.250" height="1.250"/><rect x="622.90" y="397.90" width="1.250" height="1.250"/><rect x="629.78" y="397.90" width="1.250" height="1.250"/><rect x="624.62" y="399.62" width="1.250" height="1.250"/><rect x="626.34" y="399.62" width="1.250" height="1.250"/><rect x="628.06" y="399.62" width="1.250" height="1.250"/><rect x="646.12" y="389.30" width="1.250" height="1.250"/><rect x="647.84" y="389.30" width="1.250" height="1.250"/><rect x="649.56" y="389.30" width="1.250" height="1.250"/><rect x="644.40" y="391.02" width="1.250" height="1.250"/><rect x="651.28" y="391.02" width="1.250" height="1.250"/><rect x="644.40" y="392.74" width="1.250" height="1.250"/><rect x="649.56" y="392.74" width="1.250" height="1.250"/><rect x="651.28" y="392.74" width="1.250" height="1.250"/><rect x="644.40" y="394.46" width="1.250" height="1.250"/><rect x="647.84" y="394.46" width="1.250" height="1.250"/><rect x="651.28" y="394.46" width="1.250" height="1.250"/><rect x="644.40" y="396.18" width="1.250" height="1.250"/><rect x="646.12" y="396.18" width="1.250" height="1.250"/><rect x="651.28" y="396.18" width="1.250" height="1.250"/><rect x="644.40" y="397.90" width="1.250" height="1.250"/><rect x="651.28" y="397.90" width="1.250" height="1.250"/><rect x="646.12" y="399.62" width="1.250" height="1.250"/><rect x="647.84" y="399.62" width="1.250" height="1.250"/><rect x="649.56" y="399.62" width="1.250" height="1.250"/><rect x="657.22" y="389.30" width="1.250" height="1.250"/><rect x="658.94" y="389.30" width="1.250" height="1.250"/><rect x="660.66" y="389.30" width="1.250" height="1.250"/><rect x="655.50" y="391.02" width="1.250" height="1.250"/><rect x="662.38" y="391.02" width="1.250" height="1.250"/><rect x="655.50" y="392.74" width="1.250" height="1.250"/><rect x="660.66" y="392.74" width="1.250" height="1.250"/><rect x="662.38" y="392.74" width="1.250" height="1.250"/><rect x="655.50" y="394.46" width="1.250" height="1.250"/><rect x="658.94" y="394.46" width="1.250" height="1.250"/><rect x="662.38" y="394.46" width="1.250" height="1.250"/><rect x="655.50" y="396.18" width="1.250" height="1.250"/><rect x="657.22" y="396.18" width="1.250" height="1.250"/><rect x="662.38" y="396.18" width="1.250" height="1.250"/><rect x="655.50" y="397.90" width="1.250" height="1.250"/><rect x="662.38" y="397.90" width="1.250" height="1.250"/><rect x="657.22" y="399.62" width="1.250" height="1.250"/><rect x="658.94" y="399.62" width="1.250" height="1.250"/><rect x="660.66" y="399.62" width="1.250" height="1.250"/><rect x="604.00" y="392.74" width="1.250" height="1.250"/><rect x="604.00" y="397.90" width="1.250" height="1.250"/><rect x="636.60" y="392.74" width="1.250" height="1.250"/><rect x="636.60" y="397.90" width="1.250" height="1.250"/></g></svg>
<div class="a" style="left:677px;top:71px;width:64px;height:365px;background:linear-gradient(90deg,#7a8698 0,#66768c 2px,#63738a 100%)"></div>
<div class="a" style="left:677px;top:436px;width:64px;height:195.500px;background:#b6b6b6;border-top:1px solid #c8c8c8"></div>
<div class="a" style="left:683.500px;top:85.500px;width:56px;height:40px;border-radius:4px;border:1px solid #e8d0d0;background:linear-gradient(#ff4040,#f01414 50%,#e00000)"></div>
<div class="a" style="left:688.50px;top:98.44px;font-size:13px;color:#ffe8e8;white-space:pre;transform:scaleX(0.8867);transform-origin:0.00px 0">Break All</div>
<div class="a ind" style="left:699px;top:132.200px;width:25px;height:7.600px"></div>
<div class="a sbar" style="left:683.600px;top:161.800px;width:55.600px;height:21px"></div>
<div class="a" style="left:696.00px;top:165.94px;font-size:12px;color:#e8e8e8;white-space:pre;transform:scaleX(0.9543);transform-origin:0.00px 0"><u>S</u>leep</div>
<div class="a sbar" style="left:683.600px;top:201.200px;width:55.600px;height:21.200px"></div>
<div class="a" style="left:695.80px;top:205.14px;font-size:12px;color:#e8e8e8;white-space:pre;transform:scaleX(0.9083);transform-origin:0.00px 0">Re<u>c</u>all</div>
<div class="a ind" style="left:683px;top:310.500px;width:22.500px;height:11.500px"></div>
<div class="a ind" style="left:719px;top:310.500px;width:23px;height:11.500px"></div>
<div class="a" style="left:684.80px;top:323.44px;font-size:12px;color:#202838;white-space:pre;transform:scaleX(0.8473);transform-origin:0.00px 0">Rd</div>
<div class="a" style="left:720.80px;top:323.44px;font-size:12px;color:#202838;white-space:pre;transform:scaleX(1.0567);transform-origin:0.00px 0">Wrt</div>
<div class="a sbar" style="left:683.600px;top:343.800px;width:55.600px;height:21px;background:linear-gradient(#d01010,#a00000 50%,#780000)"></div>
<div class="a" style="left:696.50px;top:347.94px;font-size:12px;color:#ffe0e0;white-space:pre;transform:scaleX(0.8843);transform-origin:0.00px 0">Passp</div>
<div class="a sbar" style="left:683.600px;top:385px;width:55.600px;height:21.200px;background:linear-gradient(#1818c0,#000090 50%,#000070)"></div>
<div class="a" style="left:694.50px;top:388.94px;font-size:12px;color:#e8e8f0;white-space:pre;transform:scaleX(0.9550);transform-origin:0.00px 0"><u style="color:#f0f040">P</u>ower</div>
<div class="a chk" style="left:683px;top:445px"></div>
<div class="a" style="left:699.00px;top:444.14px;font-size:12px;color:#14148a;white-space:pre;font-weight:bold;transform:scaleX(0.9389);transform-origin:0.00px 0">sound</div>
<div class="a" style="left:682.00px;top:591.55px;font-size:10px;color:#202020;white-space:pre;transform:scaleX(0.9278);transform-origin:0.00px 0">API number</div>
<div class="a" style="left:682px;top:605px;width:59px;height:20px;background:#f0f0f0;border:1px solid #d8d8d8"></div>
<div class="a" style="left:695px;top:606px;width:34.500px;height:18px;background:#fff"></div>
<div class="a" style="left:709.16px;top:608.14px;font-size:12px;color:#14148a;white-space:pre;font-weight:bold">0</div>
<div class="a" style="left:685px;top:614px;width:6px;height:1.500px;background:#90a8c8"></div>
<div class="a" style="left:733px;top:614px;width:7px;height:1.500px;background:#90a8c8"></div>
<div class="a" style="left:736px;top:611px;width:1.500px;height:7px;background:#90a8c8"></div>
<div class="a" style="left:674.400px;top:71px;width:1.100px;height:340px;background:#8a8a8a"></div>
<div class="a" style="left:675.500px;top:71px;width:1.600px;height:340px;background:#c4c8cc"></div>
<div class="a" style="left:675.300px;top:411px;width:1.500px;height:220.500px;background:#c2c2c2"></div>
<div class="a" style="left:66px;top:408px;width:611px;height:8.500px;background:linear-gradient(#b1b1b1 0,#b1b1b1 2.700px,#8c8c8c 2.900px,#8c8c8c 3.800px,#bababa 4px,#b8b8b8 6.800px,#8e8e8e 7px,#909090 8.500px)"></div>
<div class="a" style="left:66px;top:416.500px;width:609px;height:215px;background:#eeffee;border-left:1.500px solid #a0a0a0"></div>
<div class="a" style="left:659px;top:416px;width:16px;height:199px;background:#f0f0f0"></div>
<div class="a" style="left:659.300px;top:559.500px;width:14.200px;height:40px;background:#cdcdcd"></div>
<div class="a" style="left:68.500px;top:615px;width:606.500px;height:14.800px;background:#f0f0f0"></div>
<div class="a" style="left:66px;top:629.800px;width:611px;height:1.700px;background:#bcbcbc"></div>
<div class="a" style="left:84px;top:616px;width:423.500px;height:14px;background:#cdcdcd"></div>
<svg class="a" style="left:68px;top:416px" width="607" height="215" viewBox="68 416 607 215"><g stroke="#505050" stroke-width="1.400" fill="none"><path d="M663 427.500L666.500 424L670 427.500"/><path d="M663 606L666.500 609.500L670 606"/><path d="M77.500 619.500L74 623L77.500 626.500"/><path d="M649 619.500L652.500 623L649 626.500"/></g></svg>
<div class="a" style="left:69px;top:433.0px;width:590px;height:1px;background:#e7f6e7"></div>
<div class="a" style="left:77.00px;top:419.85px;font-size:11px;color:#202028;white-space:pre;transform:scaleX(1.1007);transform-origin:0.00px 0">9:10:02</div>
<div class="a" style="left:132.50px;top:419.85px;font-size:11px;color:#e82020;white-space:pre;transform:scaleX(1.0601);transform-origin:0.00px 0">Warning! Block start at 1012002560 = 282 ms</div>
<div class="a" style="left:69px;top:448.3px;width:590px;height:1px;background:#e7f6e7"></div>
<div class="a" style="left:77.00px;top:435.15px;font-size:11px;color:#202028;white-space:pre;transform:scaleX(1.1007);transform-origin:0.00px 0">9:18:13</div>
<div class="a" style="left:132.50px;top:435.15px;font-size:11px;color:#e82020;white-space:pre;transform:scaleX(1.0640);transform-origin:0.00px 0">Warning! Block start at 1120367872 = 391 ms</div>
<div class="a" style="left:69px;top:463.6px;width:590px;height:1px;background:#e7f6e7"></div>
<div class="a" style="left:74.05px;top:450.44px;font-size:11px;color:#202028;white-space:pre;transform:scaleX(1.0811);transform-origin:0.00px 0">10:09:56</div>
<div class="a" style="left:132.50px;top:450.44px;font-size:11px;color:#e82020;white-space:pre;transform:scaleX(1.0601);transform-origin:0.00px 0">Warning! Block start at 1788718592 = 219 ms</div>
<div class="a" style="left:69px;top:478.9px;width:590px;height:1px;background:#e7f6e7"></div>
<div class="a" style="left:74.05px;top:465.75px;font-size:11px;color:#202028;white-space:pre;transform:scaleX(1.0811);transform-origin:0.00px 0">10:09:59</div>
<div class="a" style="left:132.50px;top:465.75px;font-size:11px;color:#e82020;white-space:pre;transform:scaleX(1.0601);transform-origin:0.00px 0">Warning! Block start at 1789407744 = 234 ms</div>
<div class="a" style="left:69px;top:494.2px;width:590px;height:1px;background:#e7f6e7"></div>
<div class="a" style="left:74.05px;top:481.05px;font-size:11px;color:#202028;white-space:pre;transform:scaleX(1.1020);transform-origin:0.00px 0">10:11:01</div>
<div class="a" style="left:132.50px;top:481.05px;font-size:11px;color:#e82020;white-space:pre;transform:scaleX(1.0593);transform-origin:0.00px 0">Warning! Block start at 1802096128 = 1922 ms</div>
<div class="a" style="left:69px;top:509.5px;width:590px;height:1px;background:#e7f6e7"></div>
<div class="a" style="left:74.05px;top:496.35px;font-size:11px;color:#202028;white-space:pre;transform:scaleX(1.1020);transform-origin:0.00px 0">10:11:02</div>
<div class="a" style="left:132.50px;top:496.35px;font-size:11px;color:#e82020;white-space:pre;transform:scaleX(1.0601);transform-origin:0.00px 0">Warning! Block start at 1802098432 = 890 ms</div>
<div class="a" style="left:69px;top:524.8px;width:590px;height:1px;background:#e7f6e7"></div>
<div class="a" style="left:74.05px;top:511.65px;font-size:11px;color:#202028;white-space:pre;transform:scaleX(1.0811);transform-origin:0.00px 0">10:13:02</div>
<div class="a" style="left:132.50px;top:511.65px;font-size:11px;color:#e82020;white-space:pre;transform:scaleX(1.0601);transform-origin:0.00px 0">Warning! Block start at 1826476544 = 282 ms</div>
<div class="a" style="left:69px;top:540.1px;width:590px;height:1px;background:#e7f6e7"></div>
<div class="a" style="left:74.05px;top:526.94px;font-size:11px;color:#202028;white-space:pre;transform:scaleX(1.0811);transform-origin:0.00px 0">10:17:22</div>
<div class="a" style="left:132.50px;top:526.94px;font-size:11px;color:#e82020;white-space:pre;transform:scaleX(1.0601);transform-origin:0.00px 0">Warning! Block start at 1877086208 = 250 ms</div>
<div class="a" style="left:69px;top:555.4px;width:590px;height:1px;background:#e7f6e7"></div>
<div class="a" style="left:74.05px;top:542.25px;font-size:11px;color:#202028;white-space:pre;transform:scaleX(1.0811);transform-origin:0.00px 0">10:18:30</div>
<div class="a" style="left:132.50px;top:542.25px;font-size:11px;color:#e82020;white-space:pre;transform:scaleX(1.0593);transform-origin:0.00px 0">Warning! Block start at 1890201344 = 1218 ms</div>
<div class="a" style="left:69px;top:570.7px;width:590px;height:1px;background:#e7f6e7"></div>
<div class="a" style="left:74.05px;top:557.55px;font-size:11px;color:#202028;white-space:pre;transform:scaleX(1.0811);transform-origin:0.00px 0">10:18:30</div>
<div class="a" style="left:132.50px;top:557.55px;font-size:11px;color:#e82020;white-space:pre;transform:scaleX(1.0601);transform-origin:0.00px 0">Warning! Block start at 1890201600 = 282 ms</div>
<div class="a" style="left:69px;top:586.0px;width:590px;height:1px;background:#e7f6e7"></div>
<div class="a" style="left:74.05px;top:572.85px;font-size:11px;color:#202028;white-space:pre;transform:scaleX(1.0811);transform-origin:0.00px 0">10:23:21</div>
<div class="a" style="left:132.50px;top:572.85px;font-size:11px;color:#e82020;white-space:pre;transform:scaleX(1.0601);transform-origin:0.00px 0">Warning! Block start at 1944541696 = 266 ms</div>
<div class="a" style="left:69px;top:601.3px;width:590px;height:1px;background:#e7f6e7"></div>
<div class="a" style="left:74.05px;top:588.14px;font-size:11px;color:#202028;white-space:pre;transform:scaleX(1.0811);transform-origin:0.00px 0">10:24:10</div>
<div class="a" style="left:132.80px;top:585.43px;font-size:14px;color:#2828f0;white-space:pre;transform:scaleX(1.2661);transform-origin:0.00px 0">*****</div>
<div class="a" style="left:171.50px;top:588.14px;font-size:11px;color:#2828f0;white-space:pre;transform:scaleX(1.0812);transform-origin:0.00px 0">Scan results: Warnings - 32, errors - 0</div>
<div class="a" style="left:376.30px;top:585.43px;font-size:14px;color:#2828f0;white-space:pre;transform:scaleX(1.2661);transform-origin:0.00px 0">*****</div>
<div class="a" style="left:127px;top:416px;width:1px;height:199px;background:#e7f6e7"></div>
</div>
</body></html>
